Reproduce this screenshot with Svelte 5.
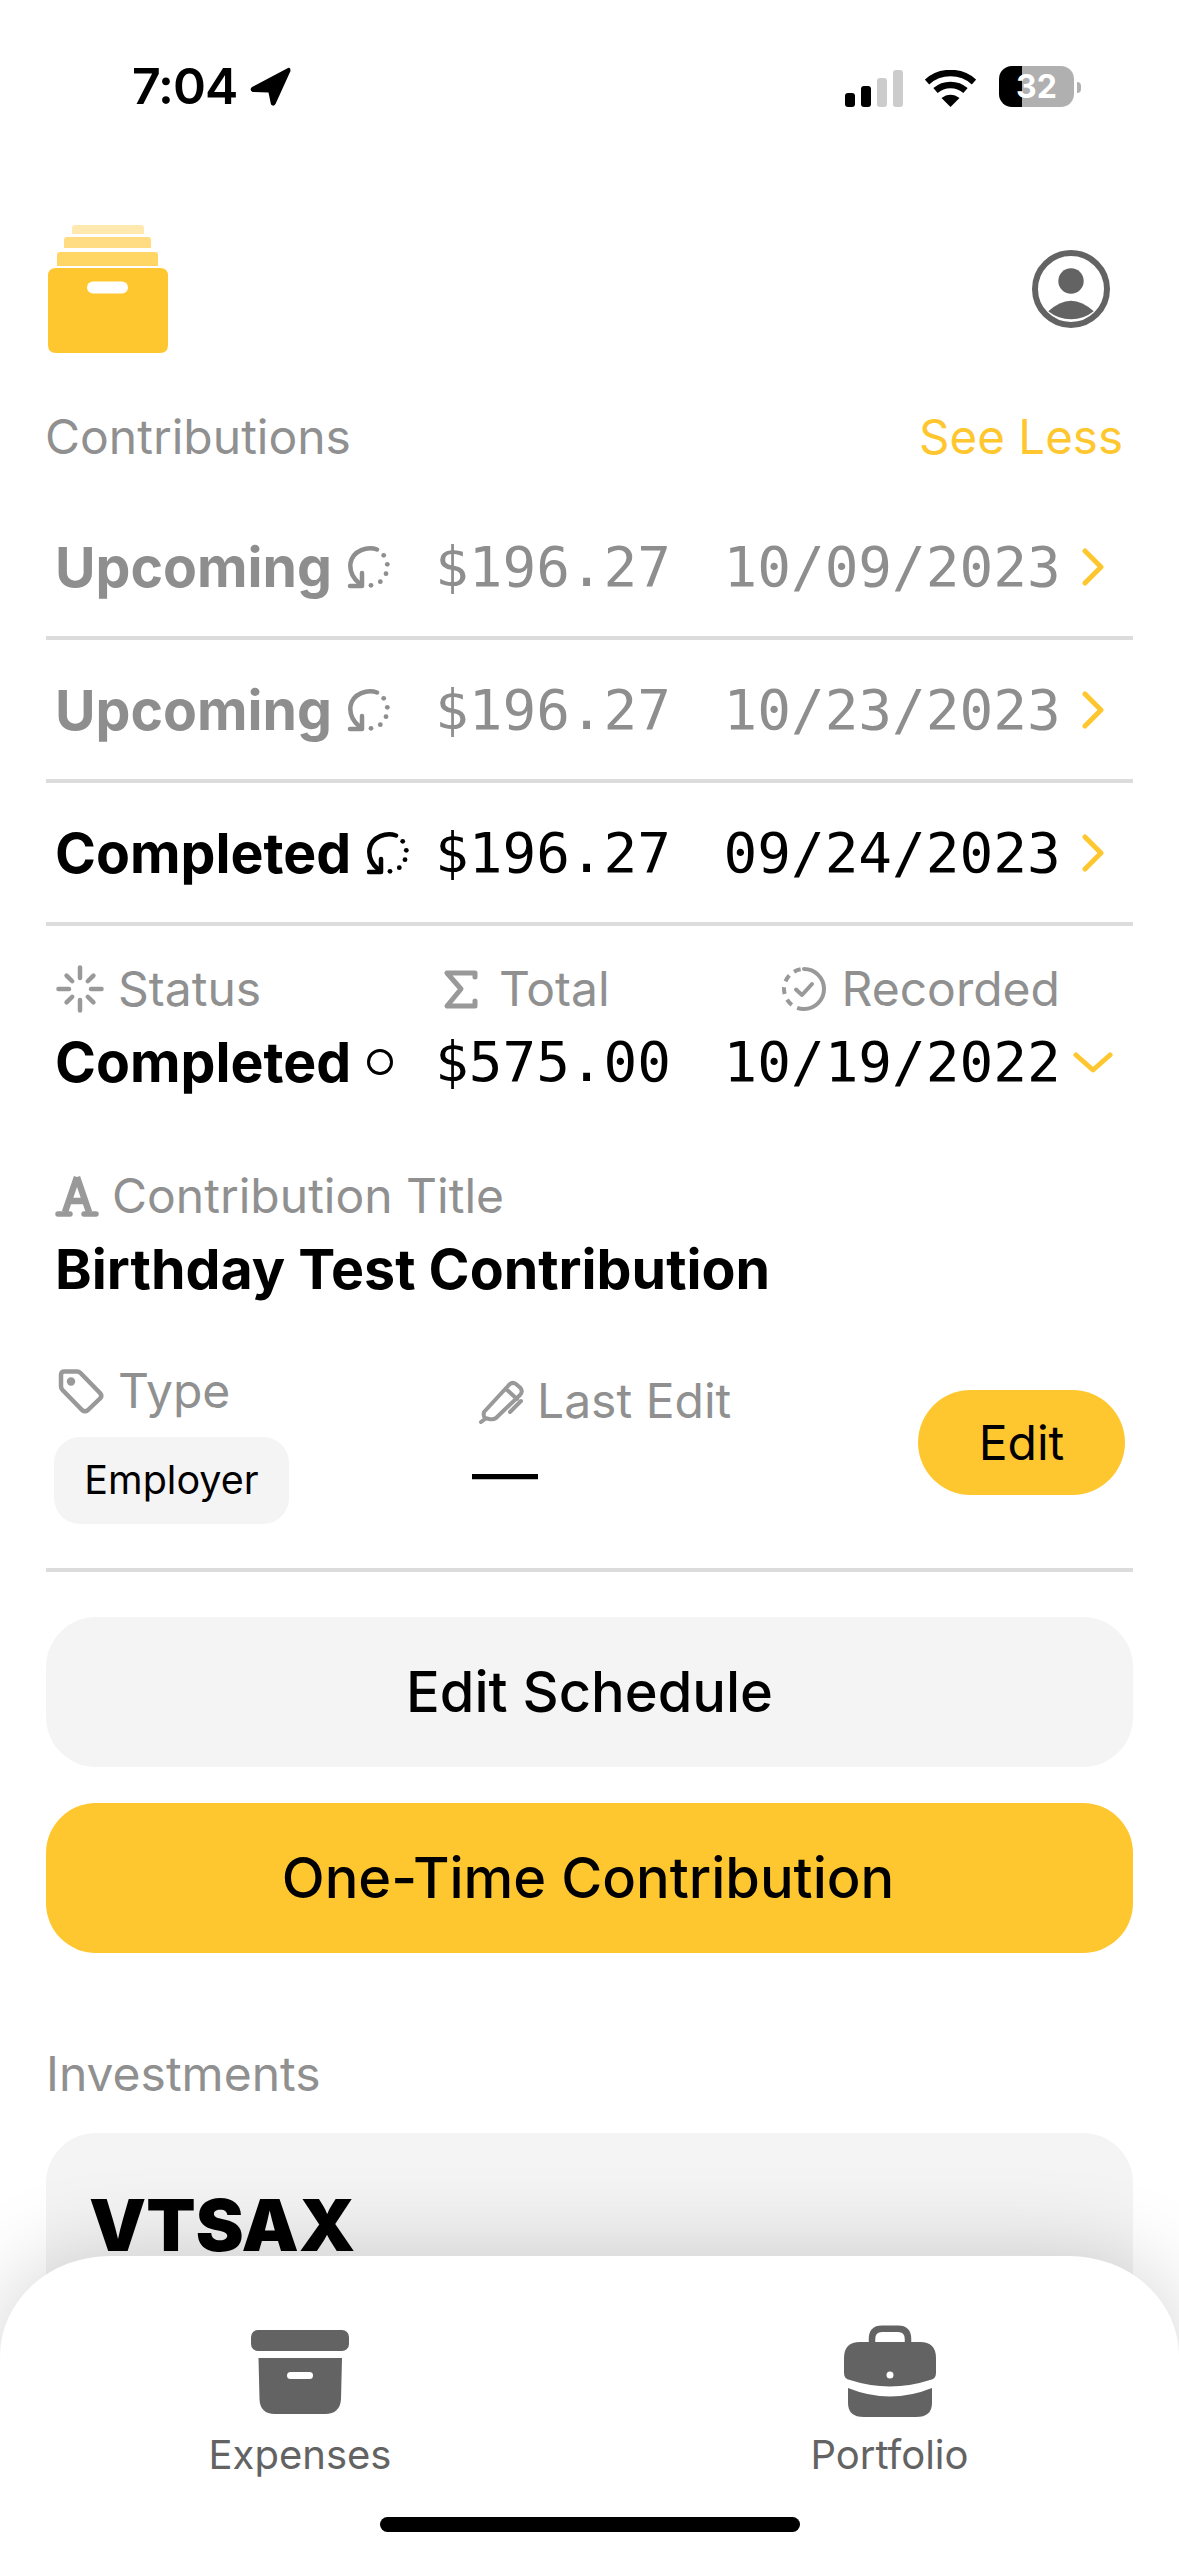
<script>
  const history = [
    { status: 'Upcoming', amount: '$196.27', date: '10/09/2023', muted: true },
    { status: 'Upcoming', amount: '$196.27', date: '10/23/2023', muted: true },
    { status: 'Completed', amount: '$196.27', date: '09/24/2023', muted: false }
  ];

  const ticks = [0, 45, 90, 135, 180, 225, 270, 315];
  const dots = [[36.7, 11.3], [40.3, 20.3], [39, 29.7], [33.3, 37.7], [24, 41.3]];
</script>

<div class="page">
  <!-- Status bar -->
  <div class="statusbar">
    <div class="clock">
      <span>7:04</span>
      <svg width="42" height="40" viewBox="0 0 42 40" aria-hidden="true">
        <path d="M39 1 L3 20 Q0 23 3.500 25 L19.500 25.500 L22 37.500 Q24.500 40 26.500 37 L41.500 4 Q41.500 0 39 1Z" fill="#000" />
      </svg>
    </div>
    <div class="indicators">
      <div class="signal">
        <span class="bar on" style="height:14px"></span>
        <span class="bar on" style="height:21px"></span>
        <span class="bar" style="height:29px"></span>
        <span class="bar" style="height:37px"></span>
      </div>
      <svg width="51" height="37" viewBox="0 0 51 37" aria-hidden="true">
        <path d="M2 12 C15 0 36 0 49 12" fill="none" stroke="#000" stroke-width="6.500" />
        <path d="M10.500 20.500 C19 13 32 13 40.500 20.500" fill="none" stroke="#000" stroke-width="6.500" />
        <path d="M16.500 28 C22 23.500 29 23.500 34.500 28 L25.500 37Z" fill="#000" />
      </svg>
      <div class="battery">32</div>
      <span class="nub"></span>
    </div>
  </div>

  <!-- Logo + profile -->
  <header class="top">
    <svg width="120" height="128" viewBox="0 0 120 128" aria-hidden="true">
      <path d="M24 9 V3 Q24 0 27 0 H93 Q96 0 96 3 V9Z" fill="#ffe9ae" />
      <path d="M16 23 V15 Q16 12 19 12 H100 Q103 12 103 15 V23Z" fill="#ffdc82" />
      <path d="M9 41 V30 Q9 27 12 27 H107 Q110 27 110 30 V41Z" fill="#ffd563" />
      <path d="M8 43 H112 Q120 43 120 51 V120 Q120 128 112 128 H8 Q0 128 0 120 V51 Q0 43 8 43Z" fill="#ffc72f" />
      <rect x="39" y="56.500" width="41" height="12" rx="6" fill="#fff" />
    </svg>
    <svg width="78" height="78" viewBox="0 0 78 78" aria-hidden="true">
      <circle cx="39" cy="39" r="36" fill="none" stroke="#636363" stroke-width="6" />
      <circle cx="39" cy="31" r="12.700" fill="#636363" />
      <path d="M16.300 61.300 Q39 40 61.700 61.300 A 36 36 0 0 1 16.300 61.300Z" fill="#636363" />
    </svg>
  </header>

  <div class="section-head">
    <span class="label">Contributions</span>
    <span class="see-less">See Less</span>
  </div>

  <!-- Contribution history -->
  <div class="rows">
    {#each history as row}
      <div class="row" class:muted={row.muted}>
        <div class="status">
          <span>{row.status}</span>
          <svg width="44" height="46" viewBox="0 0 44 46" aria-hidden="true">
            <path d="M30 5.500 C21 2 6 6 3.500 19 C2.500 27 6 34 12 39" fill="none" stroke="currentColor" stroke-width="4.500" stroke-linecap="round" />
            <path d="M3 42 H15 V29" fill="none" stroke="currentColor" stroke-width="4.500" stroke-linecap="round" stroke-linejoin="round" />
            {#each dots as d}
              <circle cx={d[0]} cy={d[1]} r="2.400" fill="currentColor" />
            {/each}
          </svg>
        </div>
        <span class="mono">{row.amount}</span>
        <span class="mono">{row.date}</span>
        <svg class="chev" width="22" height="38" viewBox="0 0 22 38" aria-hidden="true">
          <path d="M3 3 L19 19 L3 35" fill="none" stroke="#ffc72f" stroke-width="5" stroke-linecap="round" stroke-linejoin="round" />
        </svg>
      </div>
    {/each}
  </div>

  <!-- Expanded contribution -->
  <section class="detail">
    <div class="detail-grid">
      <div class="label with-icon status-label">
        <svg width="48" height="48" viewBox="0 0 48 48" aria-hidden="true">
          {#each ticks as t}
            <line x1="24" y1={t % 90 === 0 ? 2.500 : 5} x2="24" y2="13" stroke="#999" stroke-width="4.500" stroke-linecap="round" transform="rotate({t} 24 24)" />
          {/each}
        </svg>
        <span>Status</span>
      </div>
      <div class="label with-icon total-label">
        <svg width="36" height="41" viewBox="0 0 36 41" aria-hidden="true">
          <path d="M32 8 V4 H4 L18 20 L4 37 H32 V32" fill="none" stroke="#999" stroke-width="5" stroke-linecap="round" stroke-linejoin="round" />
        </svg>
        <span>Total</span>
      </div>
      <div class="label with-icon recorded-label">
        <svg width="46" height="46" viewBox="0 0 46 46" aria-hidden="true">
          <path d="M23 3 A20 20 0 0 1 23 43" fill="none" stroke="#999" stroke-width="4" stroke-linecap="round" />
          <path d="M23 43 A20 20 0 0 1 23 3" fill="none" stroke="#999" stroke-width="4" stroke-dasharray="7 6" />
          <path d="M15 23.500 L21 29 L31 18" fill="none" stroke="#999" stroke-width="4" stroke-linecap="round" stroke-linejoin="round" />
        </svg>
        <span>Recorded</span>
      </div>
      <span></span>

      <div class="status value">
        <span>Completed</span>
        <svg width="28" height="28" viewBox="0 0 28 28" aria-hidden="true">
          <circle cx="14" cy="14" r="11.500" fill="none" stroke="#000" stroke-width="3" />
        </svg>
      </div>
      <span class="mono value">$575.00</span>
      <span class="mono value">10/19/2022</span>
      <svg class="chev-down" width="40" height="24" viewBox="0 0 40 24" aria-hidden="true">
        <path d="M3 4 L20 19 L37 4" fill="none" stroke="#ffc72f" stroke-width="5" stroke-linecap="round" stroke-linejoin="round" />
      </svg>
    </div>

    <div class="title-block">
      <div class="label with-icon">
        <svg width="44" height="44" viewBox="0 0 44 44" aria-hidden="true">
          <path d="M22 3 L10 38 M22 3 L34 38 M14 27 H30" fill="none" stroke="#999" stroke-width="6.500" stroke-linejoin="round" />
          <path d="M3 40 H15 M29 40 H41" fill="none" stroke="#999" stroke-width="5.500" stroke-linecap="round" />
        </svg>
        <span>Contribution Title</span>
      </div>
      <div class="title">Birthday Test Contribution</div>
    </div>

    <div class="meta">
      <div class="meta-type">
        <div class="label with-icon">
          <svg width="46" height="45" viewBox="0 0 46 45" aria-hidden="true">
            <path d="M3 6 Q3 2.500 6.500 2.500 H19 Q21 2.500 22.500 4 L42 24 Q44.500 27 42 29.500 L30 41 Q27 43.500 24 41 L4.500 21 Q3 19.500 3 17.500Z" fill="none" stroke="#999" stroke-width="4.500" stroke-linejoin="round" />
            <circle cx="13" cy="12.500" r="4.200" fill="#999" />
          </svg>
          <span>Type</span>
        </div>
        <div class="chip">Employer</div>
      </div>
      <div class="meta-edit">
        <div class="label with-icon">
          <svg width="46" height="45" viewBox="0 0 46 45" aria-hidden="true">
            <path d="M5 33 L29 7 Q33 2 37 5 L41 8.500 Q44.500 12 41 16 L17 39 Q14 41 10 40 L6 39 Q4 37 5 33Z" fill="none" stroke="#999" stroke-width="4" stroke-linejoin="round" />
            <path d="M27 10 L38 20 M31 33 L42 22 M2 43 L6 40" fill="none" stroke="#999" stroke-width="4" stroke-linecap="round" />
          </svg>
          <span>Last Edit</span>
        </div>
        <div class="dash">—</div>
      </div>
      <button class="edit">Edit</button>
    </div>
  </section>

  <button class="wide">Edit Schedule</button>
  <button class="wide primary">One-Time Contribution</button>

  <div class="label invest-label">Investments</div>
  <div class="invest-card">
    <div class="ticker">VTSAX</div>
  </div>

  <!-- Bottom sheet nav -->
  <nav class="sheet">
    <div class="tabs">
      <div class="tab">
        <svg width="98" height="93" viewBox="0 0 98 93" aria-hidden="true">
          <rect x="0" y="5" width="98" height="21" rx="7" fill="#636363" />
          <path d="M7.500 33 H91 L90 74 Q89 89 74 89 H24 Q9 89 8.500 74Z" fill="#636363" />
          <rect x="36" y="47" width="26" height="7" rx="3.500" fill="#fff" />
        </svg>
        <span>Expenses</span>
      </div>
      <div class="tab">
        <svg width="92" height="93" viewBox="0 0 92 93" aria-hidden="true">
          <path d="M28 18 V14 Q28 3.700 38 3.700 H54 Q64 3.700 64 14 V18" fill="none" stroke="#636363" stroke-width="6.500" />
          <path d="M16 17 H76 Q92 17 92 33 V48 Q92 54 86 55 Q46 68 6 55 Q0 54 0 48 V33 Q0 17 16 17Z" fill="#636363" />
          <circle cx="46" cy="50" r="3.500" fill="#fff" />
          <path d="M4 63 Q46 80 88 63 V78 Q88 92 72 92 H20 Q4 92 4 78Z" fill="#636363" />
        </svg>
        <span>Portfolio</span>
      </div>
    </div>
    <div class="home-bar"></div>
  </nav>
</div>

<style>
  :global(body) {
    margin: 0;
    background: #fff;
  }

  .page {
    position: relative;
    width: 1179px;
    height: 2556px;
    overflow: hidden;
    background: #fff;
    color: #000;
    font-family: Inter, "Noto Sans", sans-serif;
  }

  /* Status bar */
  .statusbar {
    display: flex;
    justify-content: space-between;
    align-items: flex-end;
    height: 41px;
    padding: 66px 98px 0 132px;
  }

  .clock {
    display: flex;
    align-items: center;
    gap: 12px;
    font-size: 50px;
    line-height: 41px;
    font-weight: 600;
    letter-spacing: -1px;
  }

  .indicators {
    display: flex;
    align-items: flex-end;
    height: 41px;
  }

  .signal {
    display: flex;
    align-items: flex-end;
    gap: 6px;
    margin-right: 22px;
  }

  .bar {
    width: 10px;
    border-radius: 3px;
    background: #ccc;
  }

  .bar.on { background: #000; }

  .battery {
    display: flex;
    align-items: center;
    justify-content: center;
    width: 75px;
    height: 41px;
    margin-left: 23px;
    border-radius: 13px;
    background: linear-gradient(90deg, #000 31%, #b0b0b0 31%);
    color: #fff;
    font-size: 32px;
    font-weight: 700;
  }

  .nub {
    width: 4px;
    height: 11px;
    margin: 0 0 14px 3px;
    border-radius: 0 6px 6px 0;
    background: #b0b0b0;
  }

  .top {
    display: flex;
    justify-content: space-between;
    align-items: center;
    height: 128px;
    margin-top: 118px;
    padding: 0 69px 0 48px;
  }

  .section-head {
    display: flex;
    justify-content: space-between;
    margin-top: 54px;
    padding: 0 56px 0 45px;
    line-height: 60px;
  }

  .label {
    font-size: 48px;
    line-height: 60px;
    color: #909090;
  }

  .see-less {
    font-size: 47.500px;
    color: #ffc72f;
  }

  .with-icon {
    display: flex;
    align-items: center;
    gap: 14px;
  }

  .rows { margin-top: 30px; }

  /* Rows */
  .row,
  .detail-grid {
    display: grid;
    grid-template-columns: 380px 288.500px 358.500px 1fr;
    align-items: center;
  }

  .row {
    box-sizing: border-box;
    height: 143px;
    margin: 0 46px;
    padding-left: 9px;
    border-bottom: 4px solid #dcdcdc;
  }

  .muted { color: #8e8e8e; }

  .status {
    display: flex;
    align-items: center;
    gap: 15px;
    font-size: 55.400px;
    line-height: 68px;
    font-weight: 700;
  }

  .mono {
    font-family: "DejaVu Sans Mono", "Liberation Mono", monospace;
    font-size: 56px;
    line-height: 68px;
    white-space: nowrap;
  }

  .detail {
    margin: 0 46px;
    border-bottom: 4px solid #dcdcdc;
  }

  .detail-grid {
    padding: 33px 0 0 9px;
    row-gap: 9px;
  }

  .status-label { margin-left: 1px; }
  .total-label { margin-left: 8px; gap: 20px; }
  .recorded-label { margin-left: 57px; gap: 15px; white-space: nowrap; }

  .chev-down { margin: 2px 0 0 -9px; }

  .title-block {
    margin-top: 70px;
    padding-left: 9px;
  }

  .title-block .with-icon { gap: 13px; }

  .title {
    margin-top: 9px;
    font-size: 55.500px;
    line-height: 68px;
    font-weight: 700;
  }

  .meta {
    display: grid;
    grid-template-columns: 418px 446px 207px;
    align-items: center;
    margin-top: 58px;
    padding: 0 0 44px 8px;
  }

  .meta-type .label { margin-left: 4px; }

  .chip {
    box-sizing: border-box;
    width: 235px;
    height: 87px;
    margin-top: 16px;
    border-radius: 26px;
    background: #f4f4f4;
    font-size: 39.500px;
    line-height: 87px;
    text-align: center;
  }

  .meta-edit {
    align-self: start;
    padding-top: 10px;
  }

  .meta-edit .with-icon { margin-left: 7px; gap: 12px; }

  .dash {
    margin-top: 4px;
    font-size: 66px;
    line-height: 76px;
  }

  button {
    border: 0;
    color: #000;
    font-family: inherit;
  }

  .edit {
    width: 207px;
    height: 105px;
    border-radius: 53px;
    background: #ffc72f;
    font-size: 48px;
  }

  .wide {
    display: block;
    width: 1087px;
    height: 150px;
    margin: 45px 46px 0;
    border-radius: 50px;
    background: #f4f4f4;
    font-size: 56px;
    font-weight: 500;
  }

  .wide.primary {
    margin-top: 36px;
    padding-right: 9px;
    background: #ffc72f;
  }

  .invest-label {
    margin: 91px 46px 0;
  }

  .invest-card {
    box-sizing: border-box;
    height: 400px;
    margin: 29px 46px 0;
    padding: 52px 43px;
    border-radius: 50px;
    background: #f4f4f4;
  }

  .ticker {
    font-size: 72px;
    line-height: 80px;
    font-weight: 900;
  }

  /* Bottom sheet sits over the scrolled content */
  .sheet {
    position: absolute;
    left: 0;
    right: 0;
    bottom: 0;
    height: 300px;
    border-radius: 110px 110px 0 0 / 100px 100px 0 0;
    background: #fff;
    box-shadow: 0 0 90px rgba(0, 0, 0, 0.18);
  }

  .tabs {
    display: grid;
    grid-template-columns: 600px 579px;
    padding-top: 69px;
  }

  .tab {
    display: flex;
    flex-direction: column;
    align-items: center;
    gap: 12px;
    font-size: 40px;
    line-height: 50px;
    color: #636363;
  }

  .home-bar {
    width: 420px;
    height: 15px;
    margin: 37px auto 0;
    border-radius: 8px;
    background: #000;
  }
</style>
